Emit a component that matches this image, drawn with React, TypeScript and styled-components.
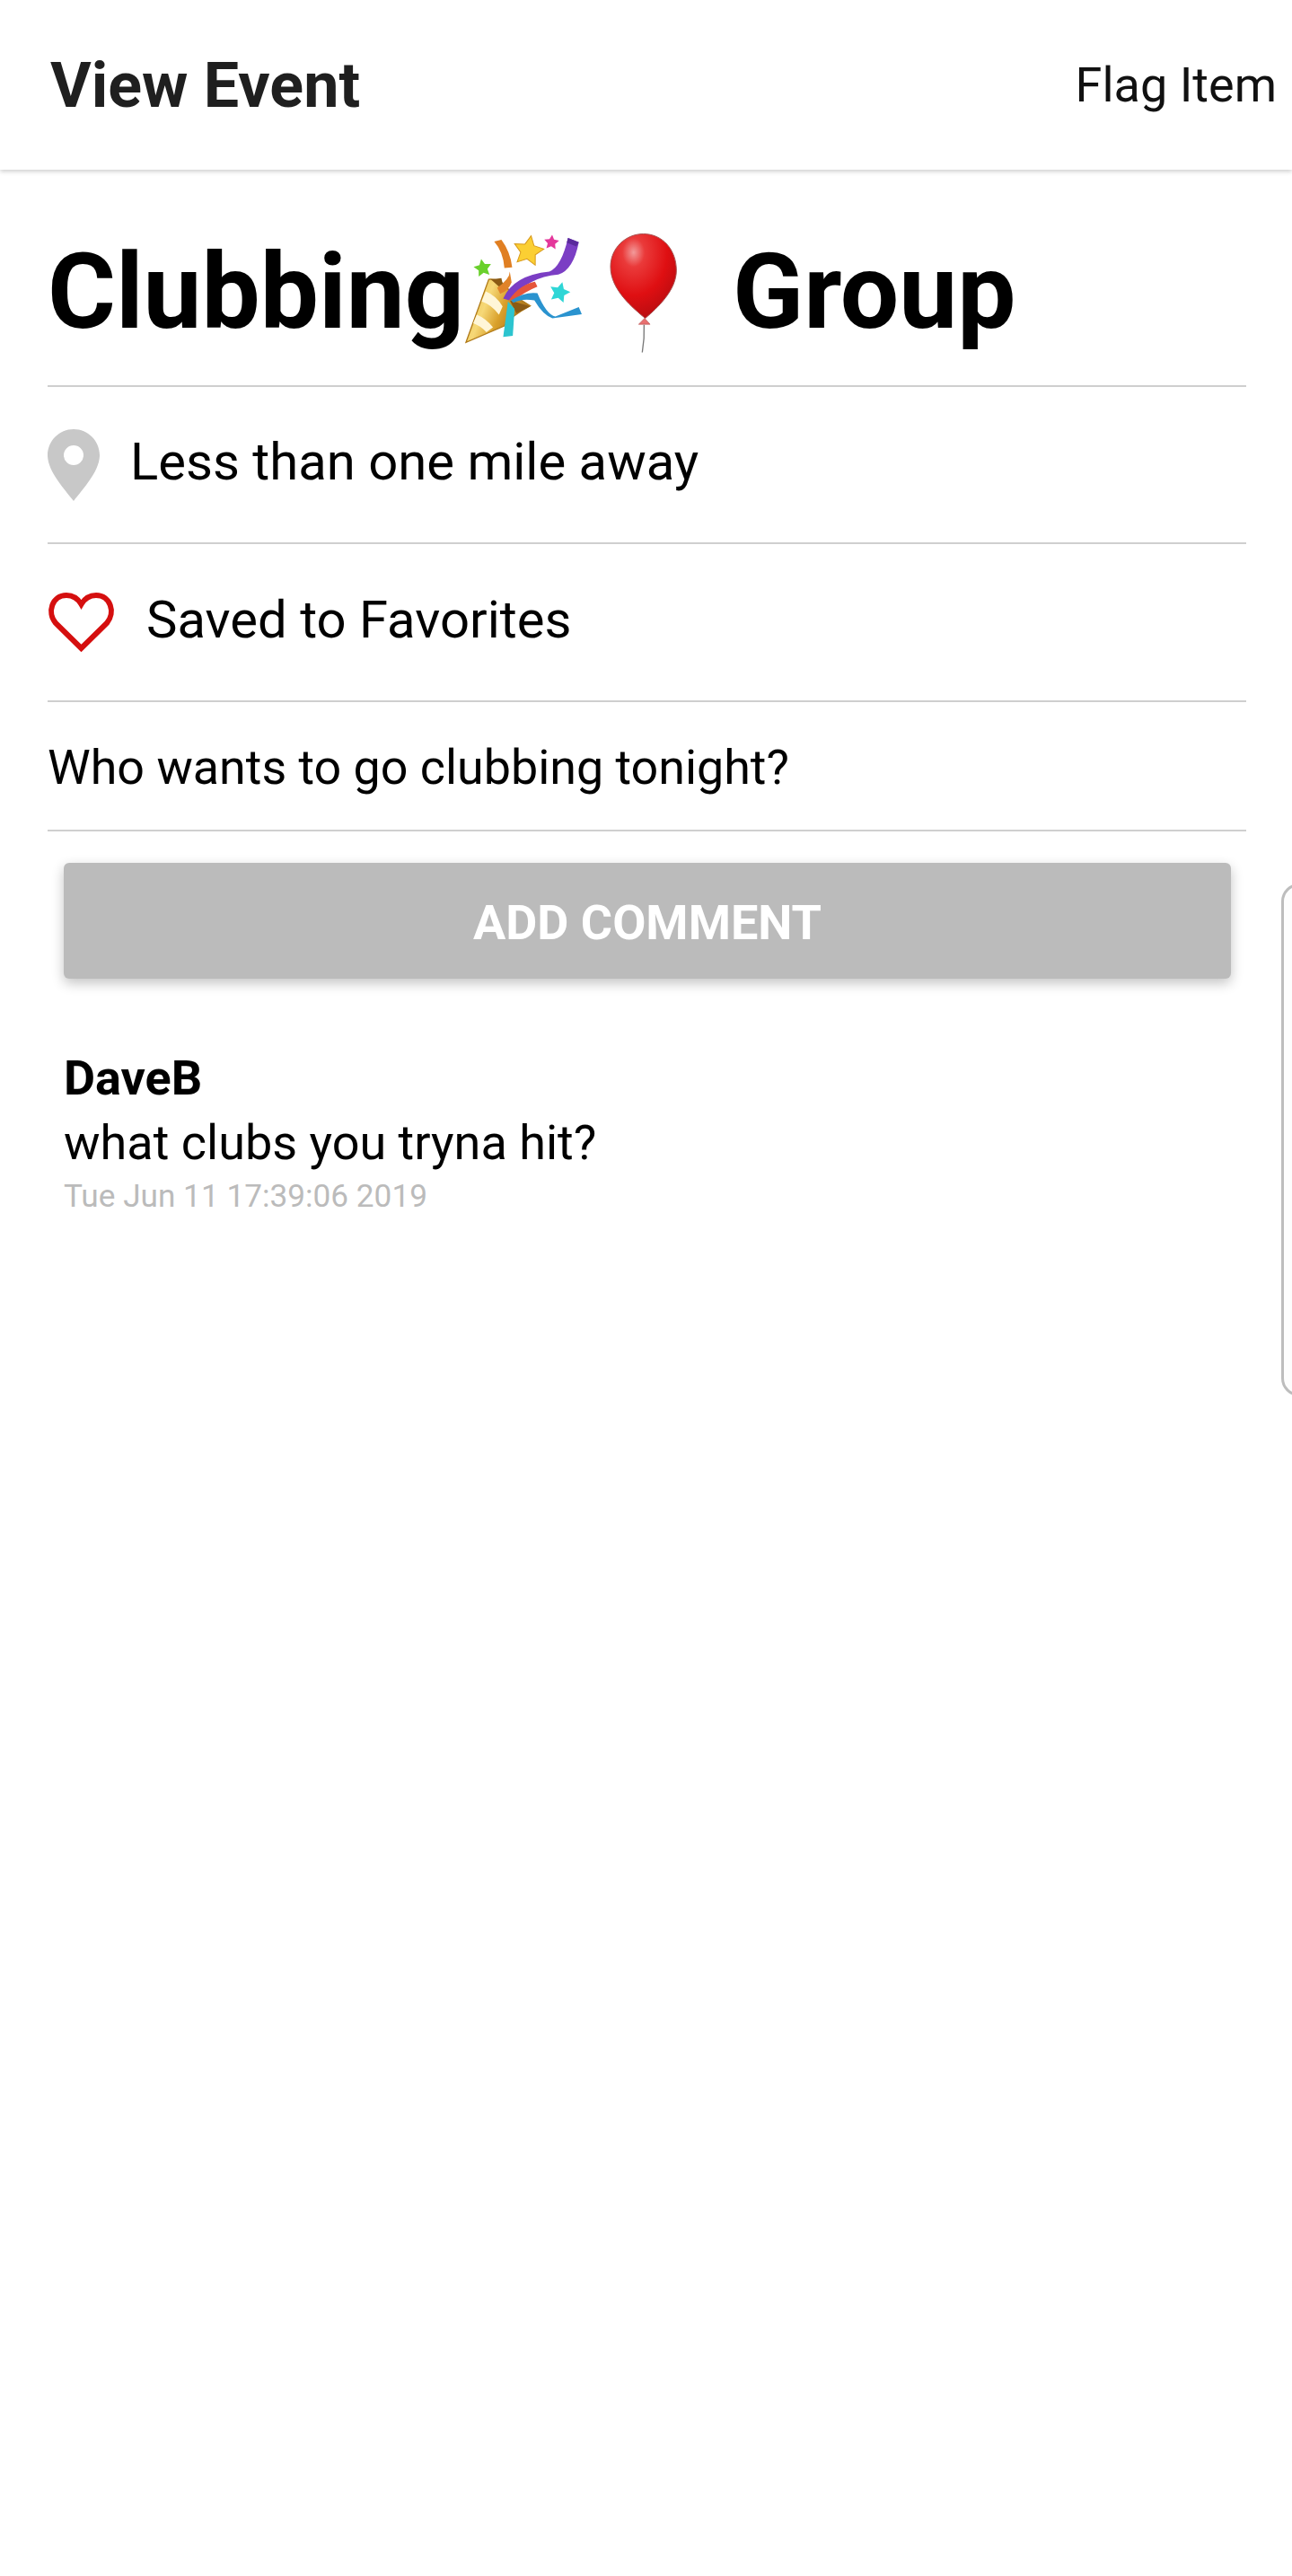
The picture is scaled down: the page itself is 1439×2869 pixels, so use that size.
import React from 'react';
import styled, {createGlobalStyle} from 'styled-components';

const GlobalStyle = createGlobalStyle`
    html, body {
        margin: 0;
        padding: 0;
        background: #ffffff;
    }
    body {
        font-family: Roboto, "Liberation Sans", sans-serif;
        color: #000000;
    }
`;

const Page = styled.div`
    position: relative;
    width: 1439px;
    height: 2869px;
    overflow: hidden;
    background: #ffffff;
`;

const Header = styled.header`
    height: 189px;
    box-sizing: border-box;
    display: flex;
    align-items: center;
    justify-content: space-between;
    padding: 0 17px 0 56px;
    background: #ffffff;
    box-shadow: 0 2px 5px rgba(0, 0, 0, 0.2);
`;

const HeaderTitle = styled.h1`
    margin: 0;
    font-size: 70px;
    font-weight: 700;
    color: #1f1f1f;
`;

const HeaderAction = styled.span`
    font-size: 54px;
    color: #111111;
`;

const Details = styled.section`
    margin: 0 51px 0 53px;
`;

const TitleRow = styled.div`
    height: 242px;
    box-sizing: border-box;
    padding-top: 76px;
    display: flex;
    align-items: flex-start;
    border-bottom: 2px solid #cfcfcf;
`;

const TitleText = styled.span<{$offset?: number}>`
    font-size: 116px;
    font-weight: 700;
    line-height: 120px;
    margin-left: ${(props) => props.$offset || 0}px;
`;

const Emoji = styled.svg<{$offset?: number}>`
    flex: none;
    margin-top: -8px;
    margin-left: ${(props) => props.$offset || 0}px;
`;

const Row = styled.div<{$height: number}>`
    height: ${(props) => props.$height}px;
    box-sizing: border-box;
    display: flex;
    align-items: center;
    border-bottom: 2px solid #cfcfcf;
`;

const RowText = styled.span<{$indent: number}>`
    font-size: 58px;
    margin-left: ${(props) => props.$indent}px;
    margin-bottom: 7px;
`;

const Description = styled.span`
    font-size: 53.8px;
    margin-top: 3px;
`;

const Comments = styled.section`
    padding: 35px 68px 0 71px;
`;

const AddButton = styled.div`
    height: 129px;
    padding-top: 3px;
    box-sizing: border-box;
    display: flex;
    align-items: center;
    justify-content: center;
    border-radius: 6px;
    background: #bbbbbb;
    color: #ffffff;
    font-size: 54px;
    font-weight: 700;
    box-shadow: 0 5px 14px rgba(0, 0, 0, 0.24);
`;

const Comment = styled.div`
    margin-top: 76px;
    display: flex;
    flex-direction: column;
`;

const CommentAuthor = styled.span`
    font-size: 54px;
    font-weight: 700;
    line-height: 69px;
`;

const CommentBody = styled.span`
    font-size: 54px;
    line-height: 76px;
`;

const CommentDate = styled.span`
    font-size: 35.2px;
    line-height: 42px;
    color: #bbbbbb;
`;

// peeking edge of the next card, hangs over the page
const SidePanel = styled.div`
    position: absolute;
    left: 1427px;
    top: 984px;
    width: 60px;
    height: 571px;
    box-sizing: border-box;
    border: 3px solid #bdbdbd;
    border-radius: 20px;
    background: #fdfdfd;
`;

const starPoints = (cx: number, cy: number, r: number, turn: number) => {
    const points = [];
    for (let i = 0; i < 10; i++) {
        const radius = i % 2 === 0 ? r : r * 0.5;
        const angle = (turn - 90 + i * 36) * Math.PI / 180;
        points.push(`${cx + radius * Math.cos(angle)},${cy + radius * Math.sin(angle)}`);
    }
    return points.join(' ');
};

const PartyPopper = () => (
    <Emoji width={137} height={132} viewBox="110 60 410 395" $offset={-2}>
        <defs>
            <linearGradient id="cone" x1="0" y1="0" x2="1" y2="0.4">
                <stop offset="0" stopColor="#e8b93a" />
                <stop offset="0.4" stopColor="#f6d877" />
                <stop offset="0.65" stopColor="#d9a02a" />
                <stop offset="1" stopColor="#a8701a" />
            </linearGradient>
        </defs>
        <path d="M122 432 L198 222 Q240 218 268 262 Q300 290 336 310 Q270 345 248 378 Z" fill="url(#cone)" stroke="#b07a18" strokeWidth="4" />
        <path d="M205 222 L240 218 L250 262 Z" fill="#8a5a14" />
        <path d="M268 292 L336 312 L290 335 Z" fill="#8a5a14" />
        <path d="M188 262 Q222 276 244 312 L232 340 Q206 306 174 296 Z M158 340 Q188 352 212 382 L190 398 Q170 376 146 368 Z" fill="#fff6d8" />
        <path d="M216 96 L240 90 Q270 130 276 182 L250 184 Q246 130 216 96 Z" fill="#e07f22" />
        <path d="M226 250 Q268 220 268 196 L274 232 Q262 262 236 270 Z" fill="#e0832a" />
        <path d="M246 286 Q280 208 400 196 Q440 180 462 84 L498 98 Q480 190 430 206 Q330 214 266 292 Z" fill="#7b3ec4" />
        <path d="M462 84 L498 98 L490 112 L458 100 Z" fill="#5a2a9c" />
        <path d="M266 290 Q300 240 352 230 L360 246 Q320 262 282 292 Z" fill="#e5553a" />
        <path d="M272 292 Q320 262 360 268 Q390 340 420 346 L498 314 L508 338 L410 352 Q378 340 350 292 Q310 284 280 300 Z" fill="#2a93cf" />
        <path d="M262 296 L284 320 L278 410 L246 414 Z" fill="#2cc4cf" />
        <polygon points={starPoints(330, 128, 52, 10)} fill="#fbcf33" stroke="#d89a1c" strokeWidth="3" />
        <polygon points={starPoints(407, 99, 26, 5)} fill="#e4379b" />
        <polygon points={starPoints(178, 185, 31, -10)} fill="#6ad02c" />
        <polygon points={starPoints(434, 266, 36, 15)} fill="#2fd6d6" />
    </Emoji>
);

const Balloon = () => (
    <Emoji width={80} height={137} viewBox="600 50 240 410" $offset={24}>
        <defs>
            <radialGradient id="rubber" cx="0.35" cy="0.22" r="0.85">
                <stop offset="0" stopColor="#f29a9a" />
                <stop offset="0.2" stopColor="#ea3a3a" />
                <stop offset="0.6" stopColor="#df0f12" />
                <stop offset="1" stopColor="#b30c10" />
            </radialGradient>
        </defs>
        <path d="M722 60 C785 60 832 112 832 182 C832 248 770 306 728 342 C690 310 612 248 612 170 C612 108 662 60 722 60 Z" fill="url(#rubber)" stroke="#a85050" strokeWidth="3" />
        <path d="M726 342 L744 362 L706 362 Z" fill="#e87070" stroke="#b85050" strokeWidth="2" />
        <path d="M724 364 Q726 410 718 456" fill="none" stroke="#777777" strokeWidth="4" />
    </Emoji>
);

const PinIcon = () => (
    <svg width={58} height={80} viewBox="0 0 58 80" style={{flex: 'none'}}>
        <path fillRule="evenodd" fill="#c8c8c8" d="M29 0 C13 0 0 13 0 29 C0 47 19 67 29 80 C39 67 58 47 58 29 C58 13 45 0 29 0 Z M29 18 A11 11 0 1 1 29 40 A11 11 0 1 1 29 18 Z" />
    </svg>
);

const HeartIcon = () => (
    <svg width={75} height={68} viewBox="0 0 75 68" style={{flex: 'none'}}>
        <path fill="none" stroke="#d50f0f" strokeWidth="6" strokeLinejoin="miter" d="M37.5 63 L9 35 C-1 23 5 4 21 4 C29 4 34 8 37.5 14 C41 8 46 4 54 4 C70 4 76 23 66 35 Z" />
    </svg>
);

const App = () => {
    return(
        <Page>
            <GlobalStyle />
            <Header>
                <HeaderTitle>View Event</HeaderTitle>
                <HeaderAction>Flag Item</HeaderAction>
            </Header>
            <Details>
                <TitleRow>
                    <TitleText>Clubbing</TitleText>
                    <PartyPopper />
                    <Balloon />
                    <TitleText $offset={60}>Group</TitleText>
                </TitleRow>
                <Row $height={175}>
                    <PinIcon />
                    <RowText $indent={34}>Less than one mile away</RowText>
                </Row>
                <Row $height={176}>
                    <HeartIcon />
                    <RowText $indent={35}>Saved to Favorites</RowText>
                </Row>
                <Row $height={144}>
                    <Description>Who wants to go clubbing tonight?</Description>
                </Row>
            </Details>
            <Comments>
                <AddButton>ADD COMMENT</AddButton>
                <Comment>
                    <CommentAuthor>DaveB</CommentAuthor>
                    <CommentBody>what clubs you tryna hit?</CommentBody>
                    <CommentDate>Tue Jun 11 17:39:06 2019</CommentDate>
                </Comment>
            </Comments>
            <SidePanel />
        </Page>
    );
};

export default App;
